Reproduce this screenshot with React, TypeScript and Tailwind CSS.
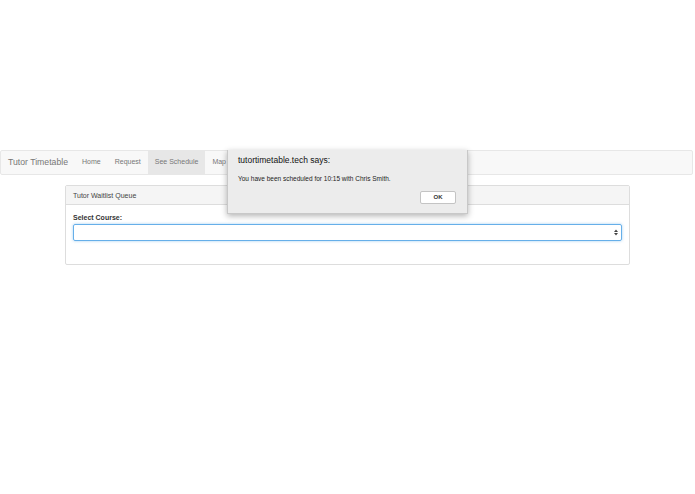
import React from 'react';

export default function App() {
  const links = ['Home', 'Request', 'See Schedule', 'Map'];

  return (
    <div
      className="relative w-[695px] h-[494px] bg-white overflow-hidden"
      style={{ fontFamily: '"Liberation Sans", Arial, sans-serif' }}
    >
      <div className="h-[150px]" />

      {/* navbar */}
      <div className="mr-[2px] h-[25px] flex items-stretch bg-[#f8f8f8] border border-[#e7e7e7] rounded-[2px]">
        <div className="flex items-center pl-[7px] pr-[7px] text-[8.7px] text-[#777]">Tutor Timetable</div>
        <div className="flex items-stretch">
          {links.map((l) => (
            <div
              key={l}
              className={`flex items-center px-[7px] text-[7px] text-[#777] ${
                l === 'See Schedule' ? 'bg-[#e7e7e7] text-[#555]' : ''
              }`}
            >
              {l}
            </div>
          ))}
        </div>
      </div>

      {/* panel */}
      <div className="mx-[65px] mt-[10px] border border-[#ddd] rounded-[2px] bg-white">
        <div className="h-[19px] flex items-center pt-[2px] px-[7px] bg-[#f5f5f5] border-b border-[#ddd] text-[7px] text-[#444]">
          Tutor Waitlist Queue
        </div>
        <div className="px-[7px] pt-[8px] pb-[23px]">
          <div className="text-[7px] font-bold text-[#333] mb-[2px] leading-[9px]">Select Course:</div>
          <div className="h-[17px] border border-[#66afe9] rounded-[2px] shadow-[0_0_3px_rgba(102,175,233,0.6)] flex items-center justify-end pr-[3px]">
            <svg width="4" height="7" viewBox="0 0 4 7">
              <path d="M0 3 L2 0.5 L4 3 Z" fill="#444" />
              <path d="M0 4 L2 6.5 L4 4 Z" fill="#444" />
            </svg>
          </div>
        </div>
      </div>

      {/* alert dialog */}
      <div className="absolute left-[227px] top-[150px] w-[241px] h-[64px] bg-[#ececec] border border-[#c8c8c8] border-t-0 shadow-[0_2px_6px_rgba(0,0,0,0.3)] px-[10px] pt-[4px]">
        <div className="text-[8.5px] text-[#111]">tutortimetable.tech says:</div>
        <div className="mt-[7px] text-[6.5px] text-[#222]">You have been scheduled for 10:15 with Chris Smith.</div>
        <div className="flex justify-end mt-[7px] pr-[1px]">
          <div className="w-[36px] h-[13px] bg-white border border-[#c4c4c4] rounded-[2px] flex items-center justify-center text-[6px] font-bold text-[#333]">
            OK
          </div>
        </div>
      </div>
    </div>
  );
}
